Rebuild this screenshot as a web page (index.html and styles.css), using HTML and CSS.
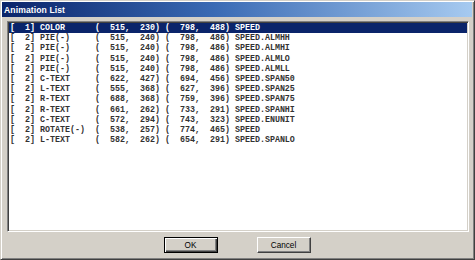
FILE: index.html
```html
<!DOCTYPE html>
<html>
<head>
<meta charset="utf-8">
<link rel="stylesheet" href="styles.css">
</head>
<body>
<div class="window">
  <div class="titlebar"><span class="title">Animation List</span></div>
  <div class="listbox">
    <div class="row selected">[  1] COLOR      (  515,  230) (  798,  488) SPEED</div>
    <div class="row">[  2] PIE(-)     (  515,  240) (  798,  486) SPEED.ALMHH</div>
    <div class="row">[  2] PIE(-)     (  515,  240) (  798,  486) SPEED.ALMHI</div>
    <div class="row">[  2] PIE(-)     (  515,  240) (  798,  486) SPEED.ALMLO</div>
    <div class="row">[  2] PIE(-)     (  515,  240) (  798,  486) SPEED.ALMLL</div>
    <div class="row">[  2] C-TEXT     (  622,  427) (  694,  456) SPEED.SPAN50</div>
    <div class="row">[  2] L-TEXT     (  555,  368) (  627,  396) SPEED.SPAN25</div>
    <div class="row">[  2] R-TEXT     (  688,  368) (  759,  396) SPEED.SPAN75</div>
    <div class="row">[  2] R-TEXT     (  661,  262) (  733,  291) SPEED.SPANHI</div>
    <div class="row">[  2] C-TEXT     (  572,  294) (  743,  323) SPEED.ENUNIT</div>
    <div class="row">[  2] ROTATE(-)  (  538,  257) (  774,  465) SPEED</div>
    <div class="row">[  2] L-TEXT     (  582,  262) (  654,  291) SPEED.SPANLO</div>
  </div>
  <div class="buttons">
    <button class="btn default">OK</button>
    <button class="btn">Cancel</button>
  </div>
</div>
</body>
</html>
```

FILE: styles.css
```css
html, body {
  margin: 0;
  padding: 0;
  background: #d4d0c8;
}

.window {
  box-sizing: border-box;
  width: 475px;
  height: 260px;
  background: #d4d0c8;
  border-top: 1px solid #d4d0c8;
  border-left: 1px solid #d4d0c8;
  border-right: 1px solid #404040;
  border-bottom: 1px solid #404040;
  box-shadow: inset 1px 1px 0 #ffffff, inset -1px -1px 0 #808080;
  padding: 1px 2px 2px 1px;
  display: flex;
  flex-direction: column;
}

.titlebar {
  height: 15px;
  background: linear-gradient(to right, #0a246a 0%, #3a6ab4 45%, #a6caf0 100%);
  display: flex;
  align-items: center;
  padding-left: 2px;
}

.title {
  font-family: "Liberation Sans", Arial, sans-serif;
  font-weight: bold;
  font-size: 8.6px;
  color: #ffffff;
  letter-spacing: 0.1px;
}

.listbox {
  box-sizing: border-box;
  margin: 4px 3px 0 5px;
  height: 211px;
  background: #ffffff;
  border-top: 1px solid #808080;
  border-left: 1px solid #808080;
  border-right: 1px solid #ffffff;
  border-bottom: 1px solid #ffffff;
  box-shadow: inset 1px 1px 0 #404040, inset -1px -1px 0 #d4d0c8;
  padding: 1px;
  display: flex;
  flex-direction: column;
}

.row {
  height: 10.2px;
  line-height: 10.2px;
  padding-left: 1px;
  font-family: "Liberation Mono", "Courier New", monospace;
  font-weight: bold;
  font-size: 8.33px;
  color: #333333;
  white-space: pre;
}

.row.selected {
  background: #0a246a;
  color: #ffffff;
}

.buttons {
  display: flex;
  justify-content: center;
  gap: 39px;
  margin-top: 5px;
}

.btn {
  box-sizing: border-box;
  width: 54px;
  height: 16px;
  padding: 0;
  margin: 0;
  background: #d4d0c8;
  font-family: "Liberation Sans", Arial, sans-serif;
  font-size: 8.2px;
  color: #000000;
  border-top: 1px solid #ffffff;
  border-left: 1px solid #ffffff;
  border-right: 1px solid #404040;
  border-bottom: 1px solid #404040;
  box-shadow: inset -1px -1px 0 #808080;
  border-radius: 0;
}

.btn.default {
  border: 1px solid #000000;
  box-shadow: inset 1px 1px 0 #ffffff, inset -1px -1px 0 #404040, inset -2px -2px 0 #808080;
}
```
